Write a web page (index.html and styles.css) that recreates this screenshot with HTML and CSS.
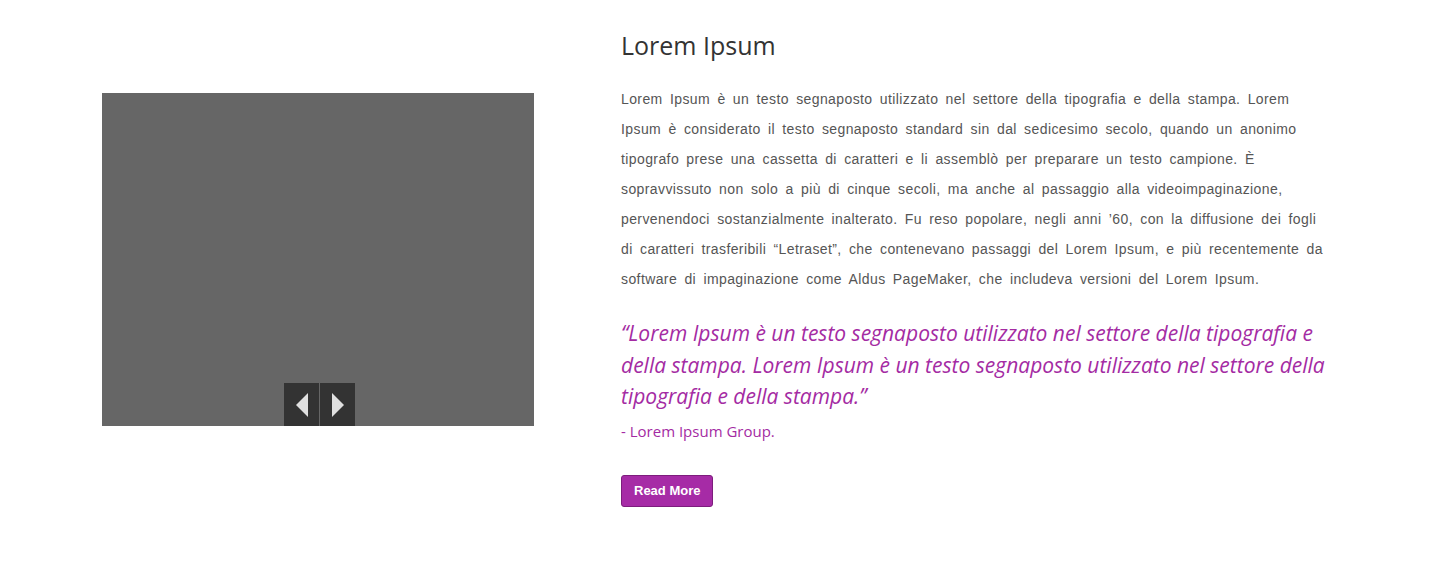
FILE: index.html
```html
<!DOCTYPE html>
<html lang="it">
<head>
<meta charset="utf-8">
<title>Lorem Ipsum</title>
<link rel="stylesheet" href="styles.css">
</head>
<body>
<section class="feature">
  <div class="media">
    <div class="slider">
      <div class="slider-nav">
        <button class="nav-btn" aria-label="Precedente">
          <svg width="12" height="24" viewBox="0 0 12 24"><polygon points="12,0 12,24 0,12" fill="#e0e0e0"/></svg>
        </button>
        <button class="nav-btn" aria-label="Successivo">
          <svg width="12" height="24" viewBox="0 0 12 24"><polygon points="0,0 0,24 12,12" fill="#e0e0e0"/></svg>
        </button>
      </div>
    </div>
  </div>
  <div class="content">
    <h2 class="title">Lorem Ipsum</h2>
    <p class="body">Lorem Ipsum è un testo segnaposto utilizzato nel settore della tipografia e della stampa. Lorem Ipsum è considerato il testo segnaposto standard sin dal sedicesimo secolo, quando un anonimo tipografo prese una cassetta di caratteri e li assemblò per preparare un testo campione. È sopravvissuto non solo a più di cinque secoli, ma anche al passaggio alla videoimpaginazione, pervenendoci sostanzialmente inalterato. Fu reso popolare, negli anni ’60, con la diffusione dei fogli di caratteri trasferibili “Letraset”, che contenevano passaggi del Lorem Ipsum, e più recentemente da software di impaginazione come Aldus PageMaker, che includeva versioni del Lorem Ipsum.</p>
    <blockquote class="quote">“Lorem Ipsum è un testo segnaposto utilizzato nel settore della tipografia e della stampa. Lorem Ipsum è un testo segnaposto utilizzato nel settore della tipografia e della stampa.”</blockquote>
    <p class="author">- Lorem Ipsum Group.</p>
    <a class="btn" href="#">Read More</a>
  </div>
</section>
</body>
</html>
```
FILE: styles.css
```css
html, body {
  margin: 0;
  padding: 0;
  background: #ffffff;
}

.feature {
  display: flex;
  align-items: flex-start;
  padding: 30px 0 0 102px;
  gap: 87px;
}

.media {
  padding-top: 63px;
  flex: 0 0 432px;
}

.slider {
  width: 432px;
  height: 333px;
  background: #666666;
  display: flex;
  align-items: flex-end;
  justify-content: center;
}

.slider-nav {
  display: flex;
  gap: 1px;
  margin-left: 3px;
}

.nav-btn {
  width: 35px;
  height: 43px;
  border: 0;
  padding: 0;
  margin: 0;
  background: #333333;
  display: flex;
  align-items: center;
  justify-content: center;
}

.content {
  width: 720px;
}

.title {
  font-family: "Open Sans", sans-serif;
  font-weight: 400;
  font-size: 25px;
  line-height: 30px;
  color: #333333;
  margin: 0 0 24px 0;
}

.body {
  width: 712px;
  font-family: "Liberation Sans", Arial, sans-serif;
  font-size: 14px;
  letter-spacing: 0.4px;
  word-spacing: 3px;
  line-height: 30px;
  color: #555555;
  margin: 0 0 24px 0;
}

.quote {
  font-family: "Open Sans", sans-serif;
  font-style: italic;
  font-weight: 500;
  font-size: 21px;
  line-height: 31.5px;
  color: #a42ba3;
  margin: 0;
}

.author {
  font-family: "Open Sans", sans-serif;
  font-size: 15px;
  line-height: 20px;
  color: #a42ba3;
  margin: 8px 0 34px 0;
}

.btn {
  display: inline-block;
  box-sizing: border-box;
  height: 32px;
  padding: 0 12px;
  font-family: "Liberation Sans", Arial, sans-serif;
  font-weight: 700;
  font-size: 13px;
  line-height: 30px;
  color: #ffffff;
  text-decoration: none;
  background: #a62ba6;
  border: 1px solid #7d1d7d;
  border-radius: 3px;
}
```
